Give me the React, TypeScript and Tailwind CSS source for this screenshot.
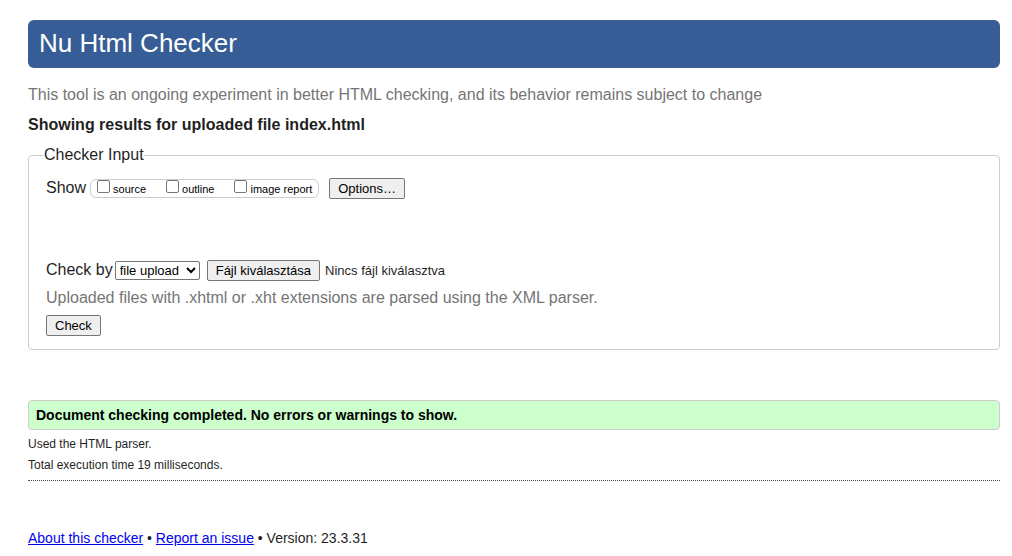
import { useRef, useState } from "react";
import type { ReactNode } from "react";

function PushButton({ children, onClick }: { children: ReactNode; onClick?: () => void }) {
  return (
    <button
      type="button"
      onClick={onClick}
      className="h-[21px] shrink-0 rounded-[2px] border border-[#767676] bg-[#efefef] px-2 text-[13px] leading-[19px] text-black hover:bg-[#e5e5e5]"
    >
      {children}
    </button>
  );
}

const showOptions = [
  { id: "showsource", label: "source" },
  { id: "showoutline", label: "outline" },
  { id: "showimagereport", label: "image report" },
];

function ShowOption({ id, label }: { id: string; label: string }) {
  return (
    <div className="flex items-start gap-[3px]">
      <input
        id={id}
        type="checkbox"
        className="size-[13px] appearance-none rounded-[2px] border border-[#767676] bg-white checked:bg-[#0075ff]"
      />
      <label htmlFor={id} className="pt-[2px] text-[11px] leading-[15px] text-black">
        {label}
      </label>
    </div>
  );
}

function FilePicker() {
  const input = useRef<HTMLInputElement>(null);
  const [name, setName] = useState("Nincs fájl kiválasztva");
  return (
    <div className="flex items-center gap-[5px]">
      <input
        ref={input}
        type="file"
        aria-label="Fájl kiválasztása"
        className="hidden"
        onChange={(e) => setName(e.target.files?.[0]?.name ?? "Nincs fájl kiválasztva")}
      />
      <PushButton onClick={() => input.current?.click()}>Fájl kiválasztása</PushButton>
      <span className="text-[13px] leading-[21px]">{name}</span>
    </div>
  );
}

export default function App() {
  return (
    <div className="bg-white pt-5 pr-3 pl-7 font-['Liberation_Sans',Arial,sans-serif] text-base text-[#1f1f1f]">
      <header>
        <h1 className="rounded-md bg-[#365d95] px-[11px] pb-[2px] text-[26px] leading-[46px] text-white">
          Nu Html Checker
        </h1>
      </header>
      <main>
        <p className="mt-[17px] leading-5 text-[#757575]">
          This tool is an ongoing experiment in better HTML checking, and its behavior remains
          subject to change
        </p>
        <h2 className="mt-[10px] leading-5 font-bold text-[#1f1f1f]">
          Showing results for uploaded file index.html
        </h2>
        <form onSubmit={(e) => e.preventDefault()}>
          <fieldset className="mt-[10px] rounded-sm border border-[#cccccc] px-[17px] pb-[13px]">
            <legend className="-ml-[2px] leading-5">Checker Input</legend>
            <div className="mt-[13px] flex items-center">
              <span className="self-start leading-5">Show</span>
              <div className="ml-1 flex h-[19px] items-start gap-5 rounded-md border border-[#cccccc] px-[6px]">
                {showOptions.map((o) => (
                  <ShowOption key={o.id} {...o} />
                ))}
              </div>
              <div className="ml-[10px] flex">
                <PushButton>Options…</PushButton>
              </div>
            </div>
            <div className="mt-[61px] flex items-center">
              <label htmlFor="docselect" className="self-start leading-5">
                Check by
              </label>
              <select
                id="docselect"
                className="mr-[7px] ml-[2px] h-[19px] w-[85px] rounded-[2px] border border-[#767676] bg-white text-[13px] text-black"
                defaultValue="file"
              >
                <option value="address">address</option>
                <option value="file">file upload</option>
                <option value="text">text input</option>
              </select>
              <FilePicker />
            </div>
            <p className="mt-[7px] leading-5 text-[#757575]">
              Uploaded files with .xhtml or .xht extensions are parsed using the XML parser.
            </p>
            <div className="mt-[7px] flex">
              <PushButton>Check</PushButton>
            </div>
          </fieldset>
        </form>
        <p className="mt-[50px] rounded-sm border border-[#cccccc] bg-[#ccffcc] px-[7px] text-sm leading-7 font-bold text-black">
          Document checking completed. No errors or warnings to show.
        </p>
        <div className="flex flex-col gap-[5px] border-b border-dotted border-[#444444] pt-[6px] pb-[7px] text-xs">
          <p>Used the HTML parser.</p>
          <p>Total execution time 19 milliseconds.</p>
        </div>
      </main>
      <footer className="pt-[47px] text-sm">
        <a href="#about" className="text-[#0000ee] underline">
          About this checker
        </a>{" "}
        •{" "}
        <a href="#issues" className="text-[#0000ee] underline">
          Report an issue
        </a>{" "}
        • Version: 23.3.31
      </footer>
    </div>
  );
}
